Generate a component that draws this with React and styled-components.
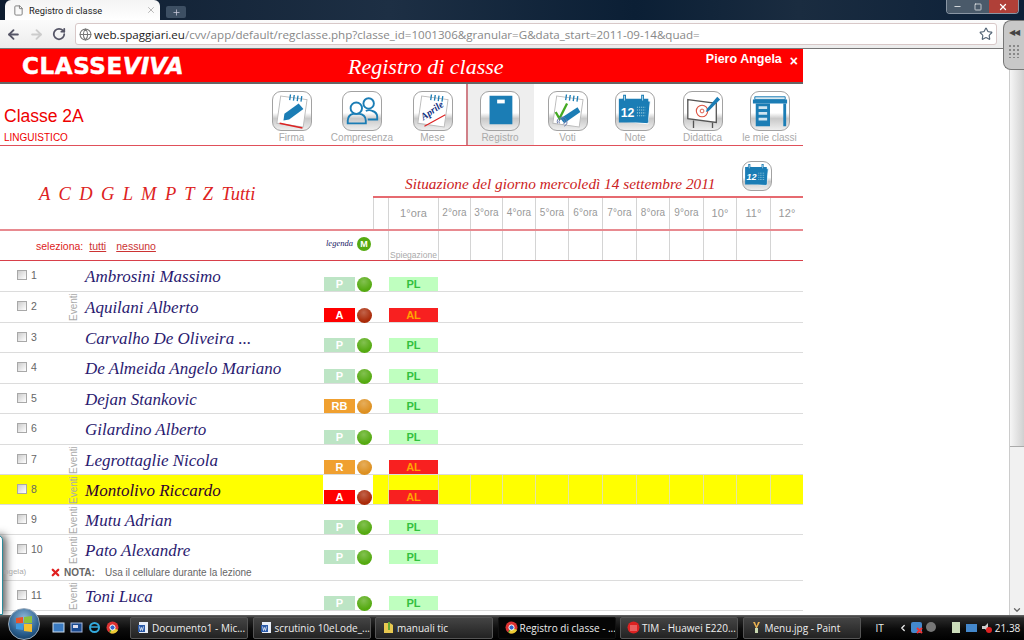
import React from 'react';
import styled, { createGlobalStyle } from 'styled-components';
import { ArrowLeft, ArrowRight, RotateCw, Star, Globe, File, X, Plus, Minus, Square, ChevronLeft, ChevronDown } from 'lucide-react';

const Global = createGlobalStyle`
  html, body { margin: 0; padding: 0; background: #fff; overflow: hidden; }
  * { box-sizing: border-box; }
`;
const RCOLS = '15px 50px 32px 32px 33px 33px 34px 34px 33px 34px 33px 34px 33px';
const COLS = '66px 16px 241px 50px ' + RCOLS;
const Screen = styled.div`width:1024px;height:640px;display:flex;flex-direction:column;overflow:hidden;font-family:"Liberation Sans",Arial,sans-serif;position:relative;`;
const TitleBar = styled.div`height:20px;flex:none;background:linear-gradient(90deg,#0d1c2f,#1d2f44 38%,#0b1f35 62%,#1a2c40 78%,#0c2038);display:flex;padding-left:5px;`;
const Tab = styled.div`width:155px;height:20px;background:linear-gradient(#f4f4f4,#fff);border-radius:6px 6px 0 0;display:flex;align-items:center;padding:0 4px 0 8px;gap:5px;font:9.3px Roboto,sans-serif;color:#222;`;
const NewTab = styled.div`width:20px;height:12px;margin:6px 0 0 6px;background:#3d4f63;border-radius:2px;color:#ccd;display:flex;align-items:center;justify-content:center;`;
const Spacer = styled.div`flex:1;`;
const WinControls = styled.div`display:flex;height:14px;width:73px;margin-right:5px;border:1px solid #8a96a4;border-top:0;border-radius:0 0 4px 4px;overflow:hidden;`;
const WinBtn = styled.div`flex:${p=>p.$g};background:${p=>p.$bg};color:#fff;display:flex;align-items:center;justify-content:center;`;
const Toolbar = styled.div`height:29px;flex:none;background:linear-gradient(#fbfbfb,#ececec);display:flex;align-items:center;padding:0 27px 0 6px;border-bottom:1px solid #777;gap:8px;color:#555;`;
const Url = styled.div`flex:1;height:22px;margin-left:1px;background:#fff;border:1px solid #d8c8c8;border-radius:3px;display:flex;align-items:center;padding:0 3px 0 3px;font:11.6px "Open Sans",sans-serif;color:#888;gap:2px;white-space:nowrap;`;
const Dark = styled.span`color:#222;`;
const Body = styled.div`flex:1;display:flex;min-height:0;`;
const Page = styled.div`width:803px;flex:none;display:flex;flex-direction:column;`;
const Gap = styled.div`flex:1;`;
const Scroll = styled.div`width:15px;background:#f1f1f1;border-left:1px solid #ccc;display:flex;flex-direction:column;align-items:center;color:#666;`;
const Thumb = styled.div`height:398px;width:100%;background:linear-gradient(90deg,#f6f6f6,#d0d0d0);border-bottom:1px solid #aaa;flex:none;`;
const Handle = styled.div`position:absolute;right:0;top:20px;width:21px;height:50px;background:#c8c8c8;border:1px solid #777;border-right:0;border-radius:8px 0 0 8px;display:flex;flex-direction:column;align-items:center;padding-top:7px;gap:6px;`;
const HArrows = styled.div`font-size:8px;line-height:10px;color:#444;letter-spacing:-1px;`;
const Dots = styled.div`width:12px;height:14px;background-image:radial-gradient(#888 1px,transparent 1px);background-size:4px 4px;`;
const Banner = styled.div`height:35px;flex:none;background:#f00;border-bottom:2px solid #666;display:flex;color:#fff;`;
const Logo = styled.div`width:348px;padding:1px 0 0 22px;font:bold 23px "DejaVu Sans",sans-serif;letter-spacing:0.6px;-webkit-text-stroke:0.5px #fff;display:flex;align-items:center;`;
const Viva = styled.i`font-weight:bold;letter-spacing:0.1px;`;
const BannerTitle = styled.div`font:italic 22px "Liberation Serif",serif;line-height:35px;white-space:nowrap;`;
const User = styled.div`margin-left:auto;font:bold 12.5px "Liberation Sans",sans-serif;padding:3px 5px 0 0;display:flex;gap:8px;align-items:flex-start;`;
const UserX = styled.span`font-size:14px;line-height:16px;margin-top:1px;`;
const Nav = styled.div`height:62px;flex:none;display:flex;border-bottom:1px solid #e0505a;`;
const ClassBox = styled.div`width:258px;padding:22px 0 0 4px;color:#e00;font-size:17.5px;`;
const Sub = styled.div`font-size:10px;margin-top:5px;`;
const NavItem = styled.div`width:${p=>p.$w}px;display:flex;flex-direction:column;align-items:center;padding:7px ${p=>p.$active?'2px':'0'} 0 0;font-size:10px;color:#aaa;gap:1px;white-space:nowrap;background:${p=>p.$active?'#eee':'transparent'};border-left:${p=>p.$active?'2px solid #d08088':'0'};`;
const IconBox = styled.div`width:${p=>p.$s||40}px;height:${p=>p.$s||40}px;flex:none;border:1px solid #a2a2a2;border-radius:9px;background:linear-gradient(#fff 55%,#c9c9c9 70%,#eee);overflow:hidden;`;
const Svg = styled.svg`display:block;width:100%;height:100%;`;
const Head = styled.div`height:85px;flex:none;display:grid;grid-template-columns:373px 1fr;border-bottom:2px solid #e88a90;`;
const Letters = styled.div`font:italic 18.5px "Liberation Serif",serif;color:#d22;word-spacing:3.8px;padding:38px 0 0 39px;`;
const HeadRight = styled.div`display:flex;flex-direction:column;`;
const Situ = styled.div`height:52px;flex:none;display:flex;align-items:flex-start;gap:27px;padding:15px 0 0 32px;font:italic 15.3px "Liberation Serif",serif;color:#c22;white-space:nowrap;border-bottom:2px solid #e66a70;`;
const SituText = styled.div`padding-top:14px;`;
const HourRow = styled.div`flex:1;display:grid;grid-template-columns:${RCOLS};`;
const HCell = styled.div`border-left:1px solid #d4d4d4;font-size:${p=>p.$wide?11:10}px;color:#999;text-align:center;line-height:30px;white-space:nowrap;letter-spacing:0.1px;`;
const Grid = styled.div`display:grid;grid-template-columns:${COLS};height:${p=>p.$h}px;flex:none;`;
const SelRow = styled(Grid)`border-bottom:1px solid #d8404a;`;
const Sel = styled.div`grid-column:1 / 4;font-size:10.5px;color:#d22;padding:9px 0 0 36px;`;
const SLink = styled.u`margin-left:${p=>p.$m}px;color:#c33;`;
const Legend = styled.div`grid-column:4 / 6;font:italic 8.5px "Liberation Serif",serif;color:#226;padding:7px 0 0 3px;display:flex;gap:4px;align-items:flex-start;`;
const MDot = styled.span`width:14px;height:14px;margin-top:-1px;border-radius:50%;background:#55aa11;color:#fff;font:bold 9px/14px "Liberation Sans",sans-serif;text-align:center;`;
const Spieg = styled.div`border-left:1px solid #d4d4d4;font-size:8.5px;color:#aaa;padding-top:19px;text-align:center;white-space:nowrap;`;
const Blank = styled.div`border-left:1px solid ${p=>p.$c};`;
const RowWrap = styled.div`flex:none;border-bottom:1px solid #dcdcdc;background:${p=>p.$hl?'#ff0':'transparent'};`;
const Num = styled.div`display:flex;gap:4px;align-items:flex-start;padding:9px 0 0 17px;font-size:10.5px;line-height:11px;color:#666;`;
const Check = styled.span`width:10px;height:10px;flex:none;border:1px solid #a8a8a8;background:linear-gradient(135deg,#ccc,#fff);`;
const EvCell = styled.div`display:flex;justify-content:center;padding-top:2px;`;
const Ev = styled.div`writing-mode:vertical-rl;transform:rotate(180deg);font-size:10px;line-height:10px;height:27px;color:#aaa;`;
const Name = styled.div`font:italic 17px "Liberation Serif",serif;color:${p=>p.$hl?'#300030':'#2a1a70'};padding:6px 0 0 3px;white-space:nowrap;`;
const St = styled.div`display:flex;align-items:flex-end;padding-left:1px;gap:2px;background:${p=>p.$hl?'#fff':'transparent'};`;
const Badge = styled.div`width:${p=>p.$w}px;height:14px;background:${p=>p.$bg};color:${p=>p.$fg};font-size:11px;font-weight:bold;text-align:center;line-height:14px;`;
const Dot = styled.span`width:15px;height:15px;border-radius:50%;margin-bottom:-1px;background:radial-gradient(circle at 45% 30%,${p=>p.$c}bb,${p=>p.$c} 65%);`;
const Cell2 = styled.div`grid-column:6;display:flex;align-items:flex-end;justify-content:center;border-left:1px solid ${p=>p.$hl?'#e5e5a0':'transparent'};`;
const Note = styled.div`font-size:10px;color:#666;display:flex;align-items:center;gap:3px;padding-left:50px;height:16px;white-space:nowrap;`;
const NoteText = styled.span`margin-left:7px;`;
const B = styled.b``;
const Task = styled.div`height:25px;flex:none;background:linear-gradient(#6a6a6a,#2a2a2a 12%,#0c0c0c 55%,#000);display:flex;align-items:center;color:#eee;font:10px "Open Sans",sans-serif;white-space:nowrap;`;
const Quick = styled.div`width:130px;padding-left:52px;display:flex;gap:5px;align-items:center;flex:none;`;
const QIcon = styled.svg`width:13px;height:13px;flex:none;`;
const TaskBtns = styled.div`display:flex;gap:4.5px;`;
const TaskBtn = styled.div`width:118px;height:22px;border:1px solid ${p=>p.$on?'#111':'#555'};border-radius:2px;background:${p=>p.$on?'#050505':'linear-gradient(#444,#222)'};display:flex;align-items:center;gap:2px;padding-left:6px;overflow:hidden;`;
const Tray = styled.div`flex:1;display:flex;align-items:center;gap:2px;padding-left:15px;`;
const TrayGap = styled.span`width:${p=>p.$w}px;flex:none;`;
const Time = styled.span`margin-left:auto;margin-right:4px;`;
const Orb = styled.div`position:absolute;left:8px;bottom:0;width:32px;height:32px;border-radius:50%;background:radial-gradient(circle at 50% 30%,#8fb8d8,#2a5f8f 60%,#0d2f4f);border:1px solid #9ab;display:flex;align-items:center;justify-content:center;`;
const OrbMark = styled.svg`width:20px;height:20px;`;
const SideWin = styled.div`position:absolute;left:-8px;top:535px;width:11px;height:80px;background:#fff;border:1px solid #2a8a9a;border-radius:0 5px 0 0;box-shadow:3px 0 8px #555;`;
const Behind = styled.div`position:absolute;left:4px;top:567px;font-size:8px;color:#aaa;`;

const C='#1b7db5';
const Pad=({children})=><Svg viewBox="0 0 40 40"><g transform="rotate(8 20 20)"><rect x="6" y="6" width="28" height="29" fill="#fff" stroke="#bbb"/><path d="M16 3v6M20 3v6M24 3v6M28 3v6" stroke="#1b7db5" strokeWidth="1.4"/></g>{children}</Svg>;
function Cal(){return <Svg viewBox="0 0 40 40"><path d="M5 8h30v24H5z" fill={C} transform="rotate(6 20 20)" stroke="#fff"/><path d="M3 7h31v25H3z" fill={C}/><path d="M9 3v7M28 3v7" stroke={C} strokeWidth="3"/><path d="M9 4v5M28 4v5" stroke="#bde" strokeWidth="1"/><text x="5" y="26" fontFamily="Liberation Sans" fontWeight="bold" fontSize="13" fill="#fff">12</text><path d="M22 16h9M22 19h9M22 22h9M22 25h9" stroke="#9cd" strokeWidth="1.2" strokeDasharray="1.2 1"/></Svg>;}
const icons={
 Firma:<Pad><path d="M12 23 27 12l5 6-15 11-6 1z" fill={C}/><path d="M7 33l24 5" stroke="#d22" strokeWidth="1.6"/></Pad>,
 Compresenza:<Svg viewBox="0 0 40 40" fill="none" stroke={C} strokeWidth="2"><circle cx="27" cy="12" r="5.5"/><path d="M24 20c2-1 5-1 7 0 3 1 5 3 5 6v3H26"/><circle cx="14" cy="17" r="6"/><path d="M5 33v-3c0-4 3-7 6-7h6c4 0 7 3 7 7v3z"/></Svg>,
 Mese:<Pad><text x="10" y="30" transform="rotate(-35 10 30)" fontFamily="Liberation Serif" fontStyle="italic" fontWeight="bold" fontSize="10.5" fill="#15307f">Aprile</text><path d="M11 36 33 24" stroke="#d22" strokeWidth="1.2"/></Pad>,
 Registro:<Svg viewBox="0 0 40 40"><path d="M9 4h24v30H9z" fill={C}/><rect x="17" y="8" width="8" height="4" fill="#fff"/></Svg>,
 Voti:<Pad><path d="M7 21l4 7 8-16" fill="none" stroke="#4a2" strokeWidth="2.4"/><path d="M12 28 30 16l3 5-17 12z" fill={C}/><path d="M9 33a5 5 0 1 1 7 3M11 33a3 3 0 1 1 4 1" fill="none" stroke="#67a" strokeWidth="1"/></Pad>,
 Note:<Cal/>,
 Didattica:<Svg viewBox="0 0 40 40"><path d="M4 8l30 4v20L4 28z" fill="#fff" stroke="#555" strokeWidth="1.4"/><path d="M10 30v8M30 32v6" stroke="#555" strokeWidth="1.4"/><circle cx="19" cy="20" r="6" fill="none" stroke="#d54" strokeWidth="1.2"/><circle cx="19" cy="20" r="2" fill="none" stroke="#d54"/><path d="M24 18 35 5l3 3-12 12-3 1z" fill={C}/></Svg>,
 'le mie classi':<Svg viewBox="0 0 40 40"><path d="M2 8h36v4H2z" fill={C}/><path d="M4 5h32v3H4z" fill="#d8e8f0" stroke={C}/><path d="M5 12h15v24H5z" fill={C}/><path d="M8 15h9v3H8zM8 21h9v3H8zM8 27h9v3H8z" fill="#cfe4f0"/><path d="M34 12h3v24h-3z" fill={C}/></Svg>,
};
const Chrome=()=><QIcon viewBox="0 0 13 13"><circle cx="6.5" cy="6.5" r="6" fill="#d33"/><path d="M6.5 6.5 12 9a6 6 0 0 1-9 2z" fill="#3a3"/><path d="M6.5 6.5 4 12a6 6 0 0 0 8-3z" fill="#ec3"/><circle cx="6.5" cy="6.5" r="2.6" fill="#36c" stroke="#fff"/></QIcon>;
const Doc=()=><QIcon viewBox="0 0 13 13"><rect x="2" y="1" width="9" height="11" fill="#e8eef8"/><rect x="1" y="4" width="7" height="7" fill="#2a5aa8"/><path d="M2.5 5.5l1 4 1-3 1 3 1-4" stroke="#fff" fill="none" strokeWidth=".7"/></QIcon>;
const Folder=()=><QIcon viewBox="0 0 13 13"><path d="M2 2h6l3 2v8H2z" fill="#e8c850"/><path d="M7 1v8" stroke="#6a3" strokeWidth="2"/></QIcon>;
const Tim=()=><QIcon viewBox="0 0 13 13"><circle cx="6.5" cy="6.5" r="6" fill="#d22"/><path d="M3 5h7M3 7h7M3 9h7" stroke="#fbb" strokeWidth=".8"/></QIcon>;
const Paint=()=><QIcon viewBox="0 0 13 13"><path d="M3 1l3 6h1l3-6-2 0-1.5 4L5 1z" fill="#e8b050"/><path d="M5 7h3v5H5z" fill="#c8d8b0"/></QIcon>;

const hours=['1°ora','2°ora','3°ora','4°ora','5°ora','6°ora','7°ora','8°ora','9°ora','10°','11°','12°'];
const students=[
 ['Ambrosini Massimo','P','PL',30],['Aquilani Alberto','A','AL',30],['Carvalho De Oliveira ...','P','PL',29],['De Almeida Angelo Mariano','P','PL',30],
 ['Dejan Stankovic','RB','PL',29],['Gilardino Alberto','P','PL',30],['Legrottaglie Nicola','R','AL',29],['Montolivo Riccardo','A','AL',29],
 ['Mutu Adrian','P','PL',29],['Pato Alexandre','P','PL',29],['Toni Luca','P','PL',29]];
const eventi=[2,7,8,9,10,11];
const SC={P:['#bde5c5','#fff','#55aa11'],A:['#f00','#fff','#aa2a08'],R:['#f0a030','#fff','#dd9020'],RB:['#f0a030','#fff','#dd9020']};
const C2={PL:['#bfffbf','#33c040'],AL:['#f82020','#ffa500']};
const navs=[['Firma',67],['Compresenza',74],['Mese',67],['Registro',68,1],['Voti',67],['Note',68],['Didattica',67],['le mie classi',67]];
const blanks=Array.from({length:11});
const tasks=[['Documento1 - Mic...',<Doc/>],['scrutinio 10eLode_...',<Doc/>],['manuali tic',<Folder/>],['Registro di classe - ...',<Chrome/>,1],['TIM - Huawei E220...',<Tim/>],['Menu.jpg - Paint',<Paint/>]];

export default function App(){
 return <Screen><Global/>
  <TitleBar>
   <Tab><File size={11} color="#777"/>Registro di classe<Spacer/><X size={10} color="#aaa"/></Tab>
   <NewTab><Plus size={9}/></NewTab><Spacer/>
   <WinControls><WinBtn $g={1} $bg="#4a5a6a"><Minus size={9}/></WinBtn><WinBtn $g={1} $bg="#4a5a6a"><Square size={8}/></WinBtn><WinBtn $g={1.4} $bg="#b04038"><X size={10} strokeWidth={3}/></WinBtn></WinControls>
  </TitleBar>
  <Toolbar>
   <ArrowLeft size={15} strokeWidth={3} color="#556"/><ArrowRight size={15} strokeWidth={3} color="#ccc"/><RotateCw size={14} strokeWidth={3} color="#556"/>
   <Url><Globe size={13} color="#777"/><span><Dark>web.spaggiari.eu</Dark>/cvv/app/default/regclasse.php?classe_id=1001306&amp;granular=G&amp;data_start=2011-09-14&amp;quad=</span><Spacer/><Star size={14} color="#567"/></Url>
  </Toolbar>
  <Body><Page>
   <Banner><Logo>CLASSE<Viva>VIVA</Viva></Logo><BannerTitle>Registro di classe</BannerTitle><User>Piero Angela<UserX>×</UserX></User></Banner>
   <Nav><ClassBox>Classe 2A<Sub>LINGUISTICO</Sub></ClassBox>{navs.map(n=><NavItem key={n[0]} $w={n[1]} $active={n[2]}><IconBox>{icons[n[0]]}</IconBox>{n[0]}</NavItem>)}</Nav>
   <Head>
    <Letters>A C D G L M P T Z Tutti</Letters>
    <HeadRight>
     <Situ><SituText>Situazione del giorno mercoledì 14 settembre 2011</SituText><IconBox $s={30}><Cal/></IconBox></Situ>
     <HourRow><HCell/>{hours.map(h=><HCell key={h} $wide={h==='1°ora'||h.length===3}>{h}</HCell>)}</HourRow>
    </HeadRight>
   </Head>
   <SelRow $h={30}>
    <Sel>seleziona:<SLink $m={6}>tutti</SLink><SLink $m={10}>nessuno</SLink></Sel>
    <Legend>legenda<MDot>M</MDot></Legend>
    <Spieg>Spiegazione</Spieg>
    {blanks.map((_,i)=><Blank key={i} $c="#d4d4d4"/>)}
   </SelRow>
   {students.map((s,i)=>{const n=i+1;const hl=n===8;return <RowWrap key={n} $hl={hl}>
    <Grid $h={s[3]}>
     <Num><Check/>{n}</Num>
     <EvCell>{eventi.includes(n)&&<Ev>Eventi</Ev>}</EvCell>
     <Name $hl={hl}>{s[0]}</Name>
     <St $hl={hl}><Badge $w={31} $bg={SC[s[1]][0]} $fg={SC[s[1]][1]}>{s[1]}</Badge><Dot $c={SC[s[1]][2]}/></St>
     <Blank $c="transparent"/>
     <Cell2 $hl={hl}><Badge $w={49} $bg={C2[s[2]][0]} $fg={C2[s[2]][1]}>{s[2]}</Badge></Cell2>
     {blanks.map((_,j)=><Blank key={j} $c={hl?'#e5e5a0':'transparent'}/>)}
    </Grid>
    {n===10&&<Note><X size={11} strokeWidth={5} color="#e02020"/><B>NOTA:</B><NoteText>Usa il cellulare durante la lezione</NoteText></Note>}
   </RowWrap>;})}
  </Page><Gap/><Scroll><Thumb/><Spacer/><ChevronDown size={10} strokeWidth={3}/></Scroll></Body>
  <Task>
   <Quick>
    <QIcon viewBox="0 0 13 13"><rect x="1" y="2" width="11" height="9" fill="#3a7ac0" stroke="#cde"/></QIcon>
    <QIcon viewBox="0 0 13 13"><rect x="1" y="2" width="11" height="9" fill="#1a4a90" stroke="#abd"/><rect x="3" y="4" width="5" height="3" fill="#dde"/></QIcon>
    <QIcon viewBox="0 0 13 13"><circle cx="6.5" cy="6.5" r="4.5" fill="none" stroke="#3ad" strokeWidth="2"/><path d="M2 6h9" stroke="#3ad" strokeWidth="1.5"/></QIcon>
    <Chrome/>
   </Quick>
   <TaskBtns>{tasks.map(t=><TaskBtn key={t[0]} $on={t[2]}>{t[1]}{t[0]}</TaskBtn>)}</TaskBtns>
   <Tray>
    IT<TrayGap $w={10}/><ChevronLeft size={10} strokeWidth={3}/>
    <QIcon viewBox="0 0 13 13"><rect x="1" y="1" width="11" height="11" rx="2" fill="#48c"/><path d="M7 7l5 5M12 7l-5 5" stroke="#e33" strokeWidth="2"/></QIcon>
    <QIcon viewBox="0 0 13 13"><circle cx="6" cy="6" r="5" fill="#777"/></QIcon>
    <TrayGap $w={8}/>
    <QIcon viewBox="0 0 13 13"><rect x="2" y="1" width="8" height="11" fill="#cdb"/></QIcon>
    <QIcon viewBox="0 0 13 13"><rect x="1" y="3" width="11" height="8" fill="#48c"/></QIcon>
    <QIcon viewBox="0 0 13 13"><path d="M2 5h3l3-3v9L5 8H2z" fill="#ccc"/><circle cx="9" cy="9" r="3" fill="#d22"/></QIcon>
    <Time>21.38</Time>
   </Tray>
  </Task>
  <Handle><HArrows>◀◀</HArrows><Dots/></Handle>
  <SideWin/><Behind>ngela)</Behind>
  <Orb><OrbMark viewBox="0 0 20 20"><path d="M2 4l7-1v6H2z" fill="#e8532b"/><path d="M10 3l8-1v7h-8z" fill="#8bc23c"/><path d="M2 10h7v6l-7-1z" fill="#3f9ae0"/><path d="M10 10h8v8l-8-1z" fill="#f5c02e"/></OrbMark></Orb>
 </Screen>;
}
